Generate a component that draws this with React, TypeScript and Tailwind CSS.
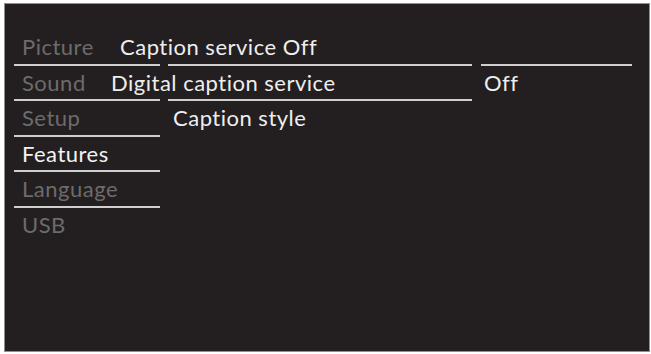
const left = [
  { label: "Picture", active: false, line: true },
  { label: "Sound", active: false, line: true },
  { label: "Setup", active: false, line: true },
  { label: "Features", active: true, line: true },
  { label: "Language", active: false, line: true },
  { label: "USB", active: false, line: false },
];

const middle = [
  { label: "Caption service Off", offset: "-ml-[48px]", line: true },
  { label: "Digital caption service", offset: "-ml-[57px]", line: true },
  { label: "Caption style", offset: "ml-[5px]", line: false },
];

const right = [
  { label: "", line: true },
  { label: "Off", line: false },
];

export default function App() {
  return (
    <div className="w-[651px] h-[354px] bg-white pt-[3px] pl-[4px] pr-[1px] pb-[2px]">
      <div
        className="h-full border border-[#8f8f8f] bg-[#231f20] pl-[9px] pt-[26px] tracking-[0.5px] [font-variant-ligatures:none]"
        style={{ fontFamily: "Lato, 'Open Sans', sans-serif" }}
      >
        <div className="flex">
          {/* Menu */}
          <div className="w-[146px] flex flex-col">
            {left.map((item) => (
              <div
                key={item.label}
                className={`h-[35.5px] leading-[34px] pl-[8px] text-[22px] ${
                  item.active ? "text-[#f2f2f2]" : "text-[#6d6b6b]"
                } ${item.line ? "border-b-2 border-[#cfcfcf]" : ""}`}
              >
                {item.label}
              </div>
            ))}
          </div>

          {/* Sub items */}
          <div className="w-[304px] ml-[8px] flex flex-col">
            {middle.map((item) => (
              <div
                key={item.label}
                className={`h-[35.5px] leading-[34px] text-[22px] text-[#eeeeee] whitespace-nowrap ${
                  item.line ? "border-b-2 border-[#cfcfcf]" : ""
                }`}
              >
                <span className={`block ${item.offset}`}>{item.label}</span>
              </div>
            ))}
          </div>

          {/* Values */}
          <div className="w-[151px] ml-[9px] flex flex-col">
            {right.map((item, i) => (
              <div
                key={i}
                className={`h-[35.5px] leading-[34px] pl-[3px] text-[22px] text-[#eeeeee] ${
                  item.line ? "border-b-2 border-[#cfcfcf]" : ""
                }`}
              >
                {item.label}
              </div>
            ))}
          </div>
        </div>
      </div>
    </div>
  );
}
